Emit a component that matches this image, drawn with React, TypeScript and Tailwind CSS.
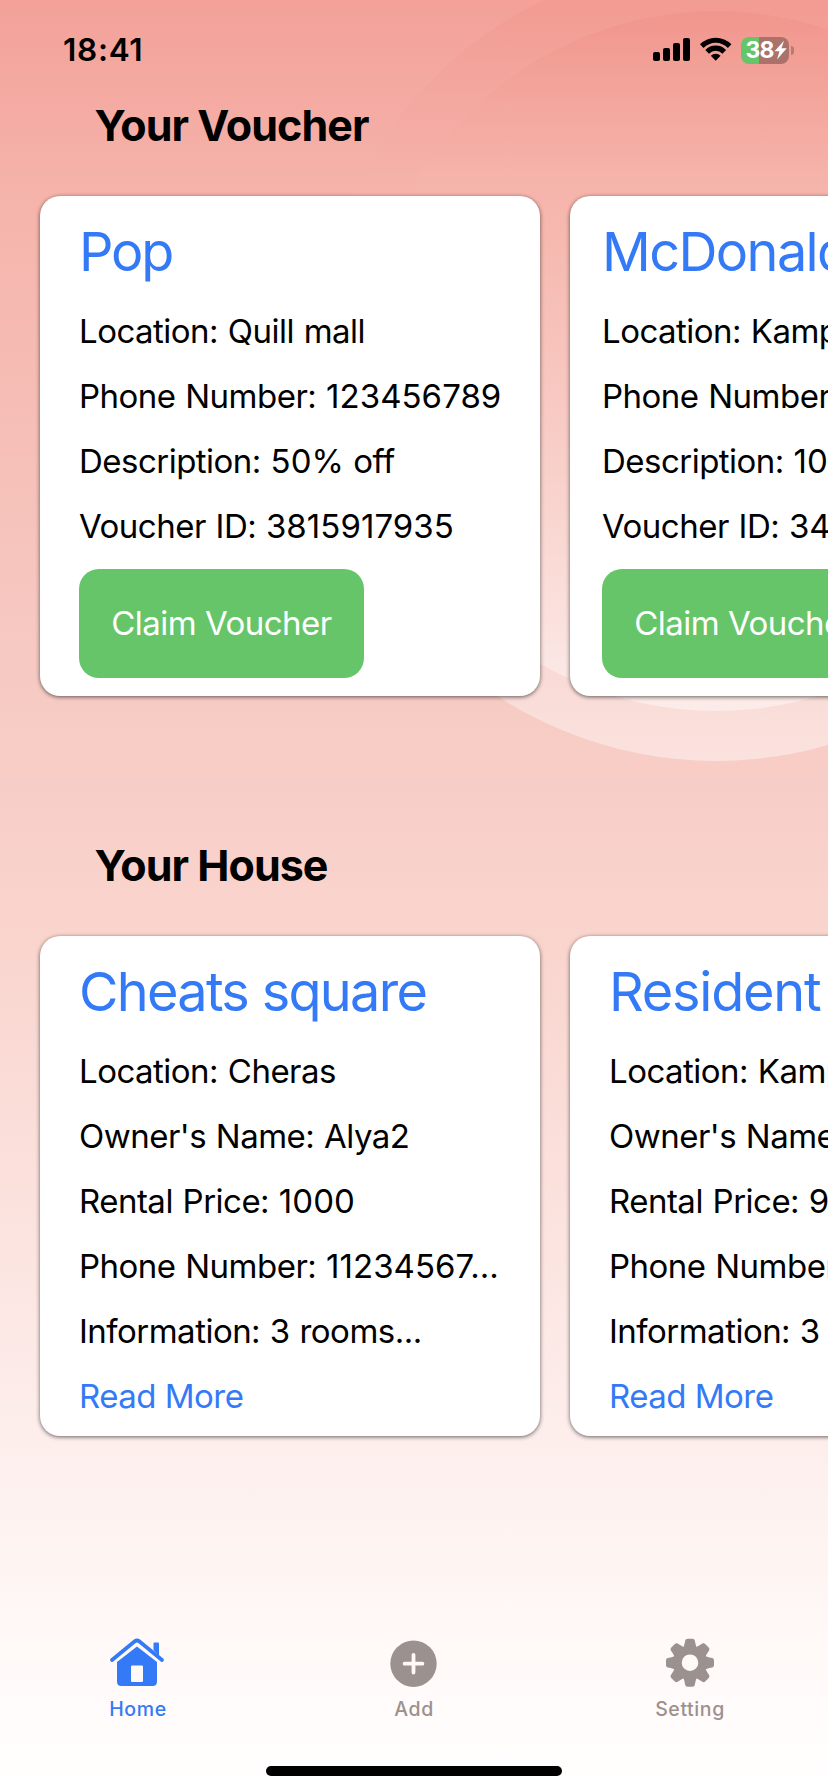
import type { ReactNode } from "react";

type CardData = { title: string; tracking: string; lines: string[] };

const vouchers: CardData[] = [
  {
    title: "Pop",
    tracking: "tracking-[-2.2px]",
    lines: ["Location: Quill mall", "Phone Number: 123456789", "Description: 50% off", "Voucher ID: 3815917935"],
  },
  {
    title: "McDonald’s",
    tracking: "tracking-[-1.6px]",
    lines: ["Location: Kampar", "Phone Number: 1234567890", "Description: 10% off", "Voucher ID: 3409182756"],
  },
];

const houses: CardData[] = [
  {
    title: "Cheats square",
    tracking: "tracking-[-1.7px]",
    lines: ["Location: Cheras", "Owner's Name: Alya2", "Rental Price: 1000", "Phone Number: 11234567...", "Information: 3 rooms..."],
  },
  {
    title: "Resident",
    tracking: "tracking-[-1.2px]",
    lines: ["Location: Kampar", "Owner's Name: Alya", "Rental Price: 900", "Phone Number: 11234567...", "Information: 3 rooms..."],
  },
];

function Backdrop() {
  return (
    <svg className="absolute inset-0 -z-10" width="828" height="1792" viewBox="0 0 828 1792">
      <defs>
        <linearGradient id="outer" gradientUnits="userSpaceOnUse" x1="0" y1="-39" x2="0" y2="761">
          <stop offset="0" stopColor="#ee8277" stopOpacity="0.25" />
          <stop offset="0.28" stopColor="#f5b4aa" stopOpacity="0.25" />
          <stop offset="1" stopColor="#ffffff" stopOpacity="0.42" />
        </linearGradient>
        <linearGradient id="inner" gradientUnits="userSpaceOnUse" x1="0" y1="11" x2="0" y2="711">
          <stop offset="0" stopColor="#ee8277" stopOpacity="0.25" />
          <stop offset="0.22" stopColor="#f5b4aa" stopOpacity="0.25" />
          <stop offset="1" stopColor="#ffffff" stopOpacity="0.42" />
        </linearGradient>
      </defs>
      <circle cx="716" cy="361" r="400" fill="url(#outer)" />
      <circle cx="716" cy="361" r="350" fill="url(#inner)" />
    </svg>
  );
}

function StatusBar() {
  return (
    <div className="flex h-[100px] items-center justify-between pl-[63px] pr-[34px]">
      <span className="text-[31.5px] font-semibold leading-none tracking-[0.7px]">18:41</span>
      <div className="flex items-center">
        <svg width="38" height="28" viewBox="0 0 38 28">
          <rect x="0" y="16" width="7" height="9" rx="2" />
          <rect x="10" y="12" width="7" height="13" rx="2" />
          <rect x="20" y="7" width="7" height="18" rx="2" />
          <rect x="30" y="2" width="7" height="23" rx="2" />
        </svg>
        <svg className="ml-[8px]" width="34" height="28" viewBox="0 0 34 28">
          <path d="M1 8.300a22 22 0 0 1 31.400 0l-3.500 3.600a17.200 17.200 0 0 0-24.400 0Z" />
          <path d="M6.300 14a14.500 14.500 0 0 1 20.800 0l-3.700 3.700a9.300 9.300 0 0 0-13.400 0Z" />
          <path d="M11.800 19.700a7 7 0 0 1 9.800 0l-4.900 5.100Z" />
        </svg>
        <div className="ml-[8px] flex h-[27px] w-[48px] items-center rounded-[8px] bg-[linear-gradient(90deg,#67c569_18px,#ab726b_18px)] pl-[4.5px]">
          <span className="text-[23px] font-bold leading-none tracking-[-0.8px] text-white">38</span>
          <svg className="ml-[0.5px] shrink-0" width="13" height="20" viewBox="0 0 13 20">
            <path d="M10 0.800 0.500 11.200h5L3 19.400 12.700 8.200H7.500Z" fill="#fff" />
          </svg>
        </div>
        <div className="ml-[2px] h-[9px] w-[3px] rounded-r-full bg-[#b97a73]" />
      </div>
    </div>
  );
}

function Line({ text }: { text: string }) {
  return (
    <p>
      {text.split(/(\d{2,}\.*)/).map((part, i) =>
        i % 2 === 1 ? (
          <span key={i} className="tracking-[0.05px]">
            {part}
          </span>
        ) : (
          part
        ),
      )}
    </p>
  );
}

function Card({ data, pad, children }: { data: CardData; pad: string; children: ReactNode }) {
  return (
    <article className={`flex h-[500px] w-[500px] shrink-0 flex-col items-start overflow-hidden whitespace-nowrap rounded-[20px] bg-white pt-[22px] shadow-[0_1px_4px_rgba(0,0,0,0.6)] ${pad}`}>
      <h3 className={`text-[54px] leading-[67px] text-[#347af6] ${data.tracking}`}>{data.title}</h3>
      <div className="mt-[26px] flex flex-col gap-[24px] text-[33px] leading-[41px] tracking-[-0.52px] [word-spacing:1px]">
        {data.lines.map((line) => (
          <Line key={line} text={line} />
        ))}
      </div>
      {children}
    </article>
  );
}

function Section({ title, children }: { title: string; children: ReactNode }) {
  return (
    <section>
      <h2 className="h-[96px] pl-[94.5px] text-[43px] font-bold leading-[50px] tracking-[-0.95px]">{title}</h2>
      <div className="flex gap-[30px] pl-[40px]">{children}</div>
    </section>
  );
}

function Tab({ label, active, children }: { label: string; active?: boolean; children: ReactNode }) {
  return (
    <div className={`flex flex-1 flex-col items-center ${active ? "text-[#347af6]" : "text-[#9b918f]"}`}>
      {children}
      <span className="mt-[7px] text-[19.5px] font-medium leading-[24px] tracking-[0.6px]">{label}</span>
    </div>
  );
}

const teeth = [0, 45, 90, 135, 180, 225, 270, 315];

export default function App() {
  return (
    <main className="relative isolate flex h-[1792px] w-[828px] flex-col overflow-hidden bg-[linear-gradient(180deg,#f3a199_0px,#f5b4ab_200px,#f6c9c2_650px,#f9d4cd_930px,#fdeeec_1440px,#fff8f6_1620px,#ffffff_1792px)] font-['Inter','Liberation_Sans',sans-serif] text-black">
      <Backdrop />
      <StatusBar />
      <Section title="Your Voucher">
        {vouchers.map((v, i) => (
          <Card key={v.title} data={v} pad={i === 0 ? "pl-[39px]" : "pl-[32px]"}>
            <button className="mt-[22px] h-[109px] w-[285px] shrink-0 rounded-[20px] bg-[#67c569] text-[33px] tracking-[-0.52px] text-white">
              Claim Voucher
            </button>
          </Card>
        ))}
      </Section>
      <div className="h-[144px]" />
      <Section title="Your House">
        {houses.map((h) => (
          <Card key={h.title} data={h} pad="pl-[39px]">
            <a className="mt-[24px] text-[33px] leading-[41px] tracking-[-0.52px] text-[#347af6]">Read More</a>
          </Card>
        ))}
      </Section>
      <nav className="mt-[200px] flex">
        <Tab label="Home" active>
          <svg width="58" height="54" viewBox="0 0 58 54" fill="currentColor">
            <path d="M44.500 14V7.500q0-1 1-1h3.500q1 0 1 1V20Z" />
            <path d="M3 24 25.500 5.500q2.500-2 5 0L53 24" fill="none" stroke="currentColor" strokeWidth="3.800" strokeLinecap="round" />
            <path d="M8 26 28 10.500 48 26v19.500q0 4.500-4.500 4.500h-31Q8 50 8 45.500Z" />
            <rect x="22" y="29.500" width="12" height="16.500" rx="1" fill="#fff9f8" />
          </svg>
        </Tab>
        <Tab label="Add">
          <svg width="56" height="54" viewBox="0 0 56 54" fill="currentColor">
            <circle cx="27.500" cy="27.700" r="23.200" />
            <path d="M27.500 18.800v17.800M18.600 27.700h17.800" stroke="#fff9f8" strokeWidth="3.800" strokeLinecap="round" />
          </svg>
        </Tab>
        <Tab label="Setting">
          <svg width="56" height="54" viewBox="0 0 56 54" fill="currentColor">
            <g transform="translate(28 26.700)">
              {teeth.map((a) => (
                <path key={a} d="M-7.500-14Q-5.800-16-4.800-22.200-4.400-24-2.500-24h5Q4.400-24 4.800-22.200 5.800-16 7.500-14Z" transform={`rotate(${a})`} />
              ))}
              <circle r="12.300" fill="none" stroke="currentColor" strokeWidth="8" />
            </g>
          </svg>
        </Tab>
      </nav>
      <div className="mb-[16px] mt-auto h-[10px] w-[296px] self-center rounded-full bg-black" />
    </main>
  );
}
